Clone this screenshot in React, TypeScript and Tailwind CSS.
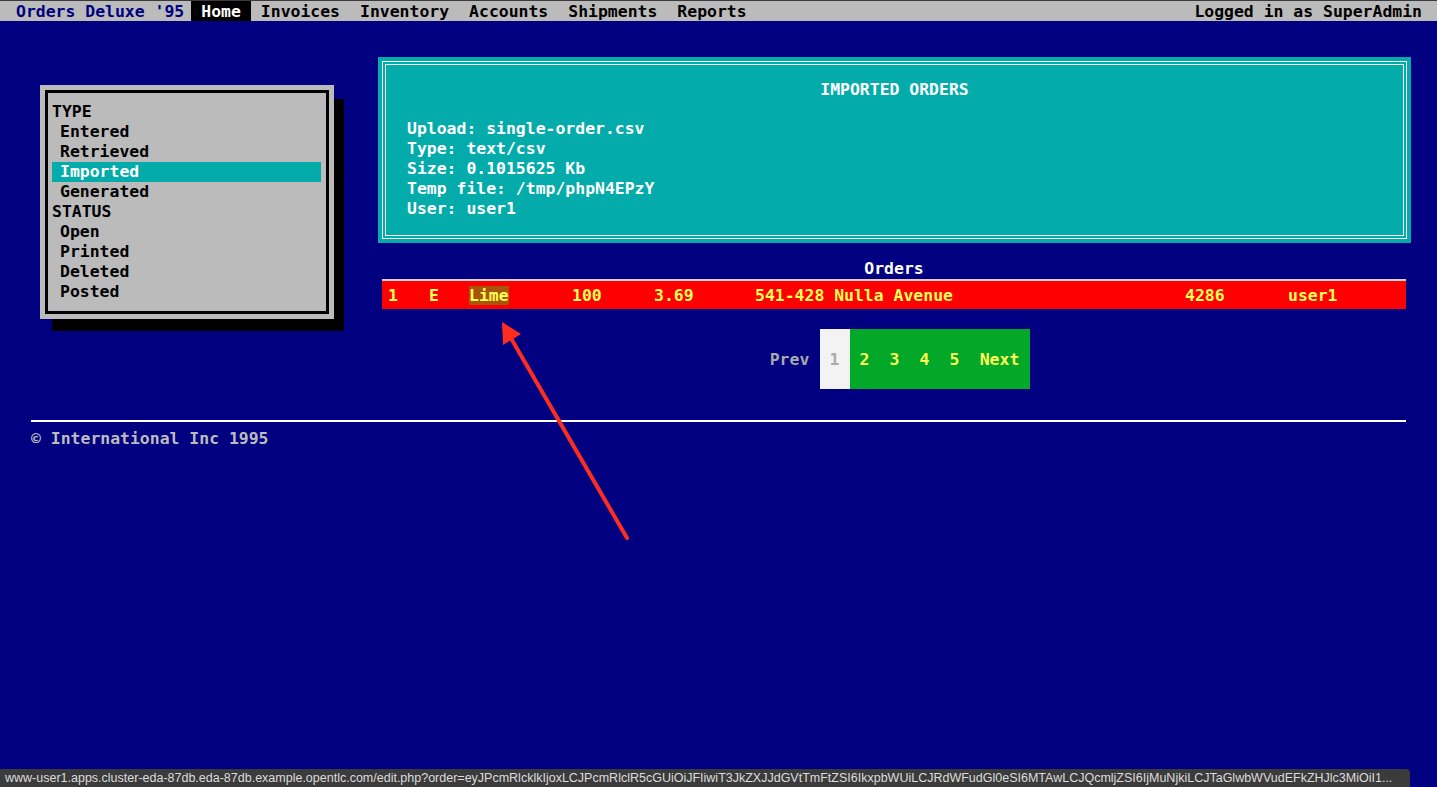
const navItems = ['Invoices', 'Inventory', 'Accounts', 'Shipments', 'Reports'];

const typeItems = ['Entered', 'Retrieved', 'Imported', 'Generated'];
const statusItems = ['Open', 'Printed', 'Deleted', 'Posted'];

const uploadInfo = [
  'Upload: single-order.csv',
  'Type: text/csv',
  'Size: 0.1015625 Kb',
  'Temp file: /tmp/phpN4EPzY',
  'User: user1',
];

const statusUrl =
  'www-user1.apps.cluster-eda-87db.eda-87db.example.opentlc.com/edit.php?order=eyJPcmRlcklkIjoxLCJPcmRlclR5cGUiOiJFIiwiT3JkZXJJdGVtTmFtZSI6IkxpbWUiLCJRdWFudGl0eSI6MTAwLCJQcmljZSI6IjMuNjkiLCJTaGlwbWVudEFkZHJlc3MiOiI1...';

function TopBar() {
  return (
    <nav className="flex h-[21px] items-stretch border-t border-[#3a3a3a] bg-[#bbbbbb] text-black">
      <span className="flex items-center pl-[16px] pr-[7px] pt-[2px] text-[#000080]">Orders Deluxe '95</span>
      <span className="flex items-center bg-black px-[10px] pt-[2px] text-white">Home</span>
      {navItems.map((item) => (
        <span key={item} className="flex items-center px-[10px] pt-[2px]">
          {item}
        </span>
      ))}
      <span className="ml-auto flex items-center pr-[15px] pt-[2px]">Logged in as SuperAdmin</span>
    </nav>
  );
}

function Sidebar() {
  return (
    <div className="ml-[9px] mt-[64px] w-[294px] shrink-0 self-start bg-[#bbbbbb] p-[5px] shadow-[11px_13px_0_-1px_#000]">
      <div className="border-[3px] border-black pb-[9px] pl-[4px] pr-[5px] pt-[9px] text-black">
        <div>TYPE</div>
        {typeItems.map((item) => (
          <div
            key={item}
            className={item === 'Imported' ? 'bg-[#04abab] pl-[8px] text-white' : 'pl-[8px]'}
          >
            {item}
          </div>
        ))}
        <div>STATUS</div>
        {statusItems.map((item) => (
          <div key={item} className="pl-[8px]">
            {item}
          </div>
        ))}
      </div>
    </div>
  );
}

function UploadPanel() {
  return (
    <div className="bg-[#04abab] p-[4px] text-white">
      <div className="border border-white p-[2px]">
        <div className="border border-white pb-[16px] pl-[21px] pr-[21px] pt-[15px]">
          <div className="mb-[19px] text-center">IMPORTED ORDERS</div>
          {uploadInfo.map((line) => (
            <div key={line}>{line}</div>
          ))}
        </div>
      </div>
    </div>
  );
}

function OrdersTable() {
  return (
    <div className="ml-[4px] mr-[5px] mt-[15px]">
      <div className="h-[21px] pt-[1px] text-center text-white">Orders</div>
      <div className="grid h-[30px] grid-cols-[41px_40px_103px_82px_101px_430px_103px_1fr] items-center border-t-2 border-[#d4d4d4] bg-[#ff0000] pt-[1px] text-[#ffff55]">
        <span className="px-[6px]">1</span>
        <span className="px-[6px]">E</span>
        <span className="px-[6px]">
          <span className="bg-[#a8550c]">Lime</span>
        </span>
        <span className="px-[6px]">100</span>
        <span className="px-[6px]">3.69</span>
        <span className="px-[6px]">541-428 Nulla Avenue</span>
        <span className="px-[6px]">4286</span>
        <span className="px-[6px]">user1</span>
      </div>
    </div>
  );
}

function Pagination() {
  return (
    <div className="mt-[20px] flex h-[60px] justify-center">
      <span className="flex w-[60px] items-center justify-center pt-[1px] text-[#aaaaaa]">Prev</span>
      <span className="flex w-[30px] items-center justify-center bg-[#f3f3f3] pt-[1px] text-[#aaaaaa]">1</span>
      {['2', '3', '4', '5'].map((n) => (
        <span key={n} className="flex w-[30px] items-center justify-center bg-[#03a829] pt-[1px] text-[#ffff55]">
          {n}
        </span>
      ))}
      <span className="flex w-[60px] items-center justify-center bg-[#03a829] pt-[1px] text-[#ffff55]">Next</span>
    </div>
  );
}

export default function App() {
  return (
    <div className="relative h-[787px] overflow-hidden bg-[#000080] font-['DejaVu_Sans_Mono','Liberation_Mono',monospace] text-[16.45px] font-bold leading-[20px]">
      <TopBar />
      <main className="px-[31px]">
        <div className="flex">
          <Sidebar />
          <div className="ml-[44px] mr-[-5px] mt-[36px] flex-1">
            <UploadPanel />
            <OrdersTable />
            <Pagination />
          </div>
        </div>
        <div className="mt-[31px] h-[2px] bg-white" />
        <div className="mt-[7px] text-[#bcbcbc]">© International Inc 1995</div>
      </main>

      <svg className="pointer-events-none absolute left-0 top-0" width="1437" height="787">
        <line x1="627" y1="538" x2="512" y2="340" stroke="#ff2d1f" strokeWidth="4" strokeLinecap="round" />
        <polygon points="502,322 503,345 521,334" fill="#ff2d1f" />
      </svg>

      <div className="absolute bottom-0 left-0 h-[18px] w-[1410px] overflow-hidden whitespace-nowrap rounded-tr-[4px] bg-[#3b3b3b] pl-[5px] font-['Liberation_Sans',Arial,sans-serif] text-[12.5px] font-normal leading-[18px] text-[#dcdcdc]">
        {statusUrl}
      </div>
    </div>
  );
}
